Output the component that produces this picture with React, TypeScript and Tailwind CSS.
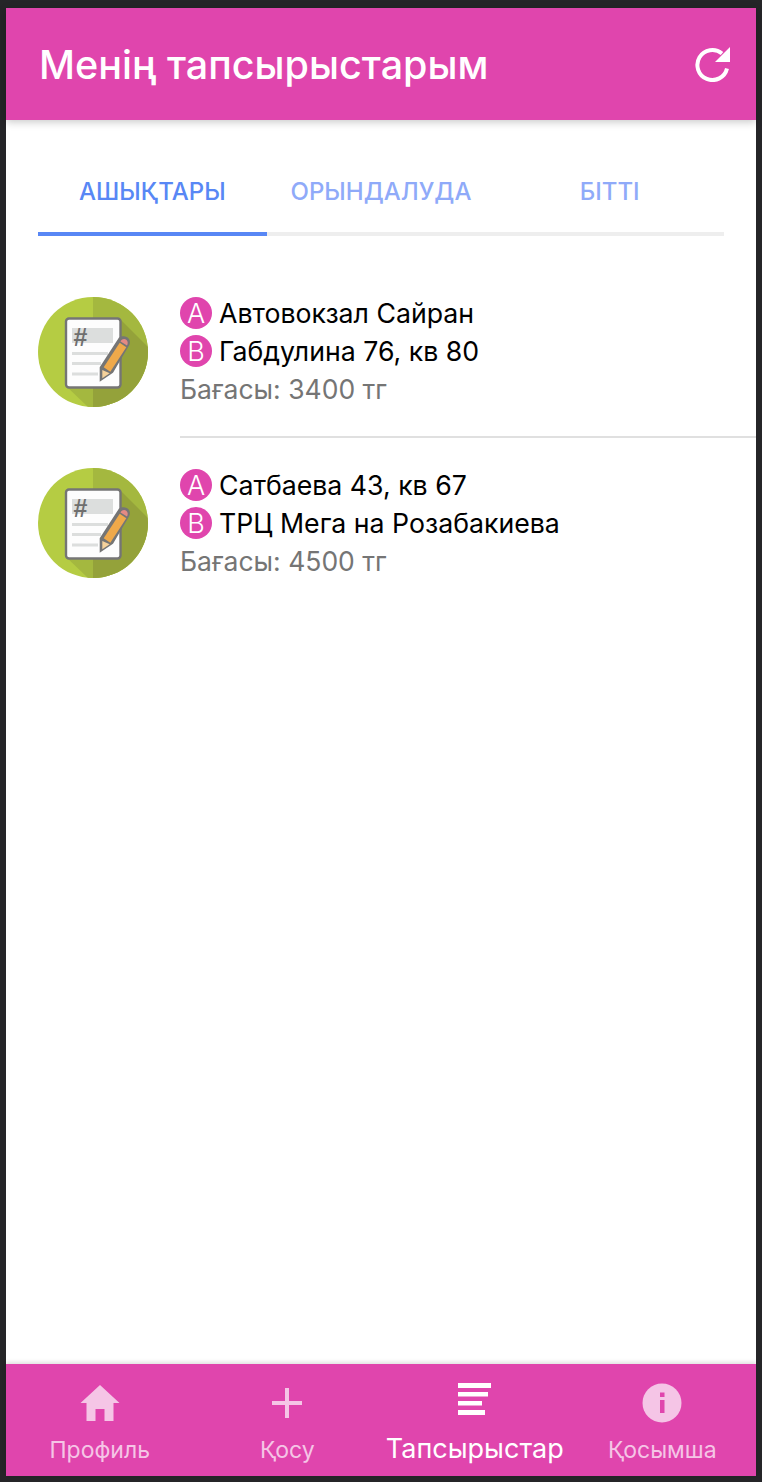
const font = "font-['Inter','Liberation_Sans',Arial,sans-serif]";

const orders = [
  { from: 'Автовокзал Сайран', to: 'Габдулина 76, кв 80', price: 'Бағасы: 3400 тг' },
  { from: 'Сатбаева 43, кв 67', to: 'ТРЦ Мега на Розабакиева', price: 'Бағасы: 4500 тг' },
];

function OrderIcon({ id }: { id: string }) {
  return (
    <svg width="110" height="110" viewBox="0 0 110 110" className="shrink-0">
      <defs>
        <clipPath id={id}>
          <circle cx="55" cy="55" r="55" />
        </clipPath>
      </defs>
      <circle cx="55" cy="55" r="55" fill="#b5cc43" />
      <g clipPath={`url(#${id})`}>
        <rect x="55" y="0" width="55" height="110" fill="#a4b83f" />
        <polygon points="27,88 50,110 55,110 55,91" fill="#a4b83f" />
        <polygon points="82,22 110,50 110,110 55,110 55,91 82,91" fill="#94a23a" />
      </g>
      <rect x="28" y="21.500" width="54.500" height="69" rx="3" fill="#fdfdfd" stroke="#757575" strokeWidth="2.400" />
      <rect x="34" y="31" width="41" height="15" fill="#dcdedd" />
      <text x="35.500" y="49" fontFamily="'Liberation Sans', Arial, sans-serif" fontSize="25" fontWeight="700" fill="#6f6f6f">#</text>
      <rect x="34" y="55" width="36" height="3" fill="#dcdedd" />
      <rect x="34" y="65" width="29" height="3" fill="#dcdedd" />
      <rect x="34" y="75.500" width="26" height="3" fill="#dcdedd" />
      {/* pencil */}
      <path d="M61.700 84.700 V70.300 L81 40.500 C84 38.500 89 38.500 91 42 C92.500 44.500 92 47 91 48.500 L75 75.700 Z" fill="#757575" />
      <polygon points="65.700,70.300 81.700,45.700 88.300,50.300 72.300,74.700" fill="#efa94a" />
      <path d="M82.500 44.500 C84 41.500 87 41.500 88.500 43 C90 44.500 90 46.500 89 48.500 Z" fill="#e58a84" />
      <polygon points="64.300,73 71.700,76.300 64.300,81.300" fill="#f6d29b" />
    </svg>
  );
}

function Badge({ letter }: { letter: string }) {
  return (
    <span className="flex h-[32px] w-[32px] shrink-0 items-center justify-center rounded-full bg-[#e045ad] text-[27px] font-light leading-none text-white">
      {letter}
    </span>
  );
}

function HomeIcon() {
  return (
    <svg width="40" height="37" viewBox="0 0 40 37" fill="#f5c5e6">
      <path d="M20 0 L39.500 18 H33.500 V36 H24.500 V24 H15.500 V36 H6.500 V18 H0.500 Z" />
    </svg>
  );
}

function PlusIcon() {
  return (
    <svg width="30" height="30" viewBox="0 0 30 30" fill="#f5c5e6">
      <rect x="13" y="0" width="4" height="30" />
      <rect x="0" y="13" width="30" height="4" />
    </svg>
  );
}

function ListIcon() {
  return (
    <svg width="33" height="32" viewBox="0 0 33 32" fill="#ffffff">
      <rect x="0" y="0" width="33" height="5" />
      <rect x="0" y="9" width="30" height="4.500" />
      <rect x="0" y="18" width="24" height="4.500" />
      <rect x="0" y="27" width="27" height="5" />
    </svg>
  );
}

function InfoIcon() {
  return (
    <svg width="40" height="40" viewBox="0 0 40 40">
      <circle cx="20" cy="20" r="19.500" fill="#f5c5e6" />
      <rect x="18" y="9.500" width="4.500" height="4.500" fill="#e045ad" />
      <rect x="18" y="17" width="4.500" height="13" fill="#e045ad" />
    </svg>
  );
}

function RefreshIcon() {
  return (
    <svg width="35" height="35" viewBox="0 0 35 35" fill="none">
      <path d="M27 6.500 A15 15 0 1 0 32 21.500" stroke="#ffffff" strokeWidth="4" />
      <polygon points="35,0 35,15 20,15" fill="#ffffff" />
    </svg>
  );
}

const navItems = [
  { label: 'Профиль', icon: <HomeIcon />, active: false },
  { label: 'Қосу', icon: <PlusIcon />, active: false },
  { label: 'Тапсырыстар', icon: <ListIcon />, active: true },
  { label: 'Қосымша', icon: <InfoIcon />, active: false },
];

export default function App() {
  return (
    <div className={`flex h-[1482px] w-[762px] flex-col overflow-hidden bg-[#252528] px-[6px] pb-[6px] pt-[8px] ${font}`}>
      <div className="flex min-h-0 flex-1 flex-col bg-white">
        {/* Header */}
        <header className="relative z-10 flex h-[112px] shrink-0 items-center justify-between bg-[#e045ad] pl-[33px] pr-[26px] shadow-[0_2px_8px_rgba(0,0,0,0.22)]">
          <h1 className="pt-[3px] text-[39.5px] font-medium leading-none text-white">Менің тапсырыстарым</h1>
          <RefreshIcon />
        </header>

        {/* Tabs */}
        <div className="mx-[32px] mt-[40px] grid grid-cols-3 border-b-4 border-[#eeeeee]">
          <div className="relative flex h-[72px] items-center justify-center pb-[8px] text-[24px] font-medium text-[#5887f5]">
            АШЫҚТАРЫ
            <div className="absolute -bottom-[4px] left-0 right-0 h-[4px] bg-[#5887f5]" />
          </div>
          <div className="flex h-[72px] items-center justify-center pb-[8px] text-[24px] font-medium text-[#8faaf9]">ОРЫНДАЛУДА</div>
          <div className="flex h-[72px] items-center justify-center pb-[8px] text-[24px] font-medium text-[#8faaf9]">БІТТІ</div>
        </div>

        {/* Orders */}
        <div className="mt-[61px] flex flex-col gap-[30px] pl-[32px]">
          {orders.map((o, i) => (
            <div key={o.from} className="flex gap-[32px]">
              <OrderIcon id={`clip-${i}`} />
              <div className={i === 0 ? 'h-[141px] flex-1 border-b-2 border-[#e0e0e0]' : 'flex-1'}>
                <div className={`flex h-[38px] items-center gap-[7px] text-[26.7px] text-black ${i === 0 ? '-mt-[3px]' : '-mt-[2px]'}`}>
                  <Badge letter="A" />
                  <span>{o.from}</span>
                </div>
                <div className="flex h-[38px] items-center gap-[7px] text-[26.7px] text-black">
                  <Badge letter="B" />
                  <span>{o.to}</span>
                </div>
                <div className="flex h-[38px] items-center pt-[2px] text-[26.5px] text-[#757575]">{o.price}</div>
              </div>
            </div>
          ))}
        </div>
      </div>

      {/* Bottom navigation */}
      <nav className="relative z-10 grid h-[112px] shrink-0 grid-cols-4 bg-[#e045ad] shadow-[0_-2px_4px_rgba(0,0,0,0.12)]">
        {navItems.map((item) => (
          <div key={item.label} className="flex flex-col items-center pt-[19px]">
            <div className={item.active ? 'flex h-[40px] items-start justify-center' : 'flex h-[40px] items-center justify-center'}>
              {item.icon}
            </div>
            <div
              className={
                item.active
                  ? 'mt-[10px] whitespace-nowrap text-[27px] leading-[32px] text-white'
                  : 'mt-[11px] whitespace-nowrap text-[23px] leading-[32px] text-[#f5c5e6]'
              }
            >
              {item.label}
            </div>
          </div>
        ))}
      </nav>
    </div>
  );
}
